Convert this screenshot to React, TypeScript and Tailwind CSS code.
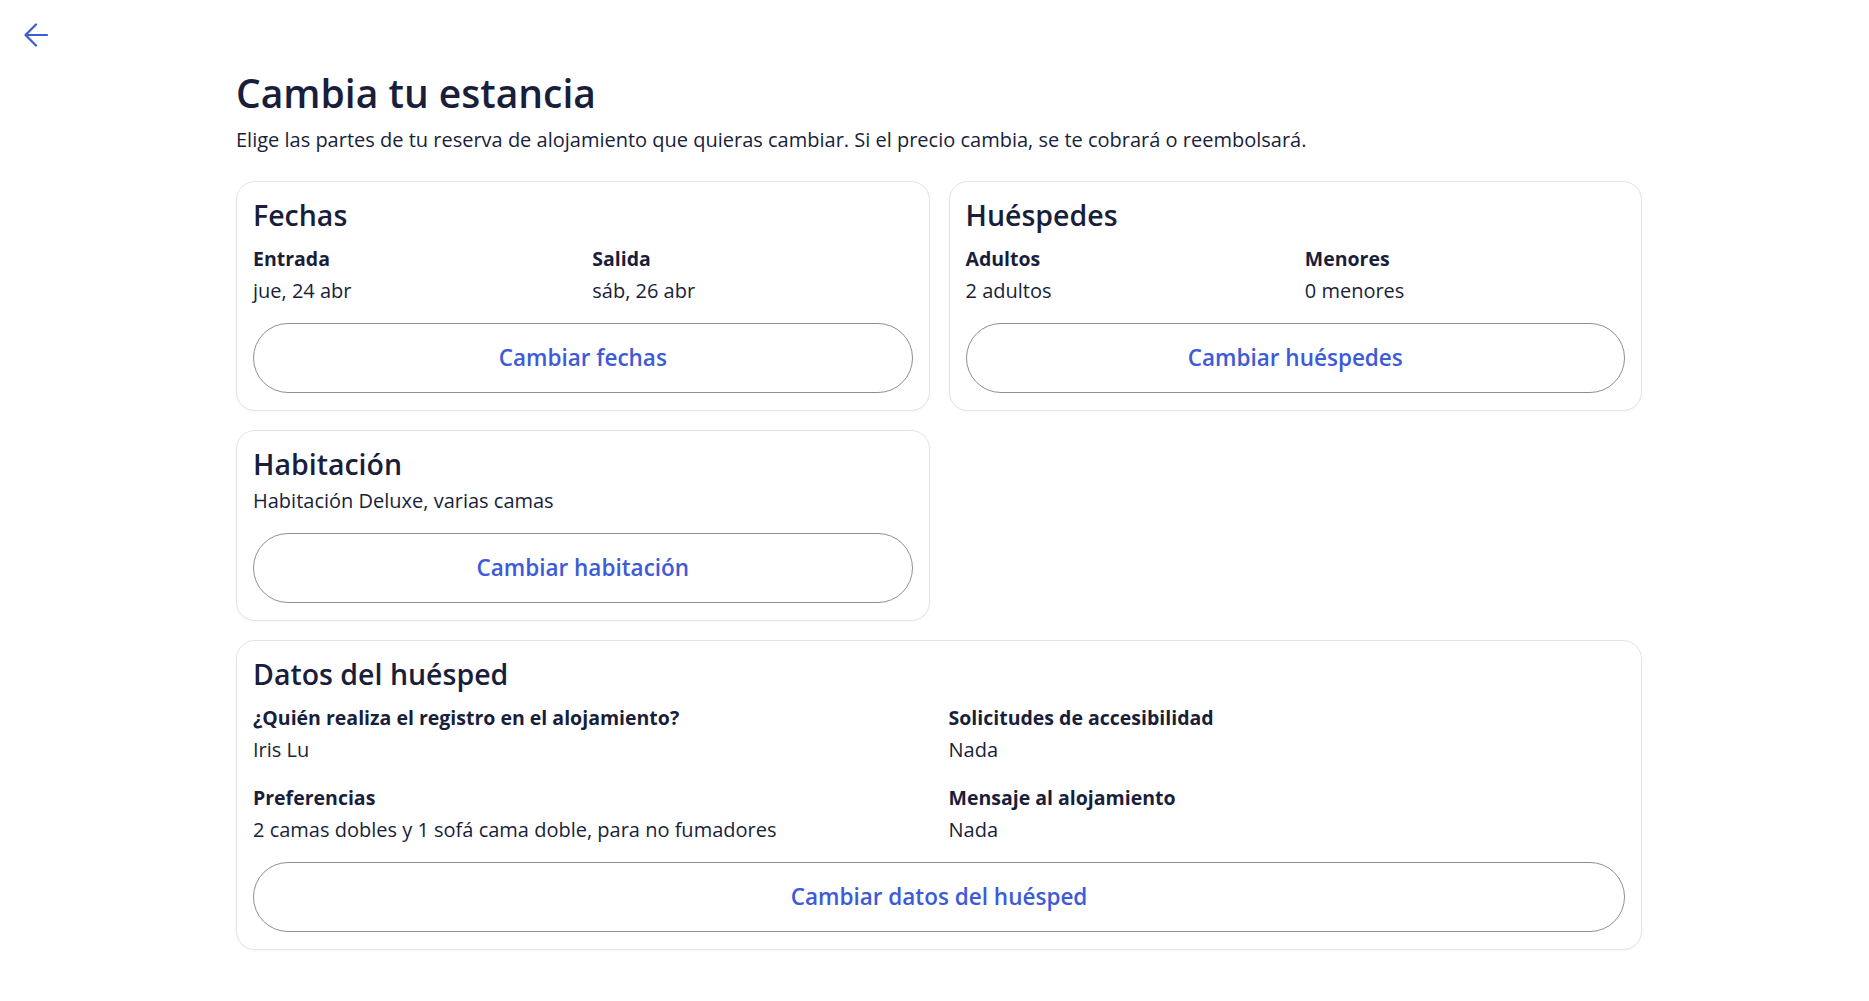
import type { ReactNode } from "react";

const INK = "text-[#191e3b]";

function BackArrow() {
  return (
    <svg width="24" height="24" viewBox="0 0 24 24" fill="none" className="block">
      <path
        d="M23 12H1.5M12 1.5L1.5 12L12 22.5"
        stroke="#3d5bd9"
        strokeWidth="2.2"
        strokeLinecap="round"
        strokeLinejoin="round"
      />
    </svg>
  );
}

function Card({ title, children }: { title: string; children: ReactNode }) {
  return (
    <section className="rounded-[19px] border border-[#e4e4e8] bg-white px-[16px] pt-[15px] pb-[17px] shadow-[0_1px_3px_rgba(25,30,59,0.04)]">
      <h2 className={`text-[28.5px] leading-[36px] font-semibold ${INK}`}>{title}</h2>
      {children}
    </section>
  );
}

function Field({ label, value }: { label: string; value: string }) {
  return (
    <div>
      <p className={`text-[19.5px] leading-[32px] font-bold ${INK}`}>{label}</p>
      <p className={`text-[20px] leading-[32px] ${INK}`}>{value}</p>
    </div>
  );
}

function ChangeButton({ label }: { label: string }) {
  return (
    <button className="mt-4 flex h-[70px] w-full items-center justify-center rounded-full border border-[#8d8e99] bg-white text-[22.5px] font-semibold text-[#3d5bd9]">
      {label}
    </button>
  );
}

export default function App() {
  return (
    <div className="min-h-screen w-full bg-white font-['Open_Sans',sans-serif]">
      <div className="flex pl-[24px] pt-[23px]">
        <button aria-label="Volver" className="flex">
          <BackArrow />
        </button>
      </div>

      <main className="ml-[236px] w-[1406px] pb-10">
        <h1 className={`mt-[23px] text-[39px] leading-[46px] font-semibold ${INK}`}>
          Cambia tu estancia
        </h1>
        <p className={`mt-[10px] text-[20px] leading-[28px] ${INK}`}>
          Elige las partes de tu reserva de alojamiento que quieras cambiar. Si el precio cambia, se te cobrará o reembolsará.
        </p>

        <div className="mt-[27px] grid grid-cols-2 items-start gap-[19px]">
          <Card title="Fechas">
            <div className="mt-[10px] grid grid-cols-2 gap-[19px]">
              <Field label="Entrada" value="jue, 24 abr" />
              <Field label="Salida" value="sáb, 26 abr" />
            </div>
            <ChangeButton label="Cambiar fechas" />
          </Card>

          <Card title="Huéspedes">
            <div className="mt-[10px] grid grid-cols-2 gap-[19px]">
              <Field label="Adultos" value="2 adultos" />
              <Field label="Menores" value="0 menores" />
            </div>
            <ChangeButton label="Cambiar huéspedes" />
          </Card>

          <Card title="Habitación">
            <p className={`mt-[3px] text-[20px] leading-[32px] ${INK}`}>
              Habitación Deluxe, varias camas
            </p>
            <ChangeButton label="Cambiar habitación" />
          </Card>
        </div>

        <div className="mt-[19px]">
          <Card title="Datos del huésped">
            <div className="mt-[10px] grid grid-cols-2 gap-x-[19px] gap-y-[16px]">
              <Field label="¿Quién realiza el registro en el alojamiento?" value="Iris Lu" />
              <Field label="Solicitudes de accesibilidad" value="Nada" />
              <Field label="Preferencias" value="2 camas dobles y 1 sofá cama doble, para no fumadores" />
              <Field label="Mensaje al alojamiento" value="Nada" />
            </div>
            <ChangeButton label="Cambiar datos del huésped" />
          </Card>
        </div>
      </main>
    </div>
  );
}
